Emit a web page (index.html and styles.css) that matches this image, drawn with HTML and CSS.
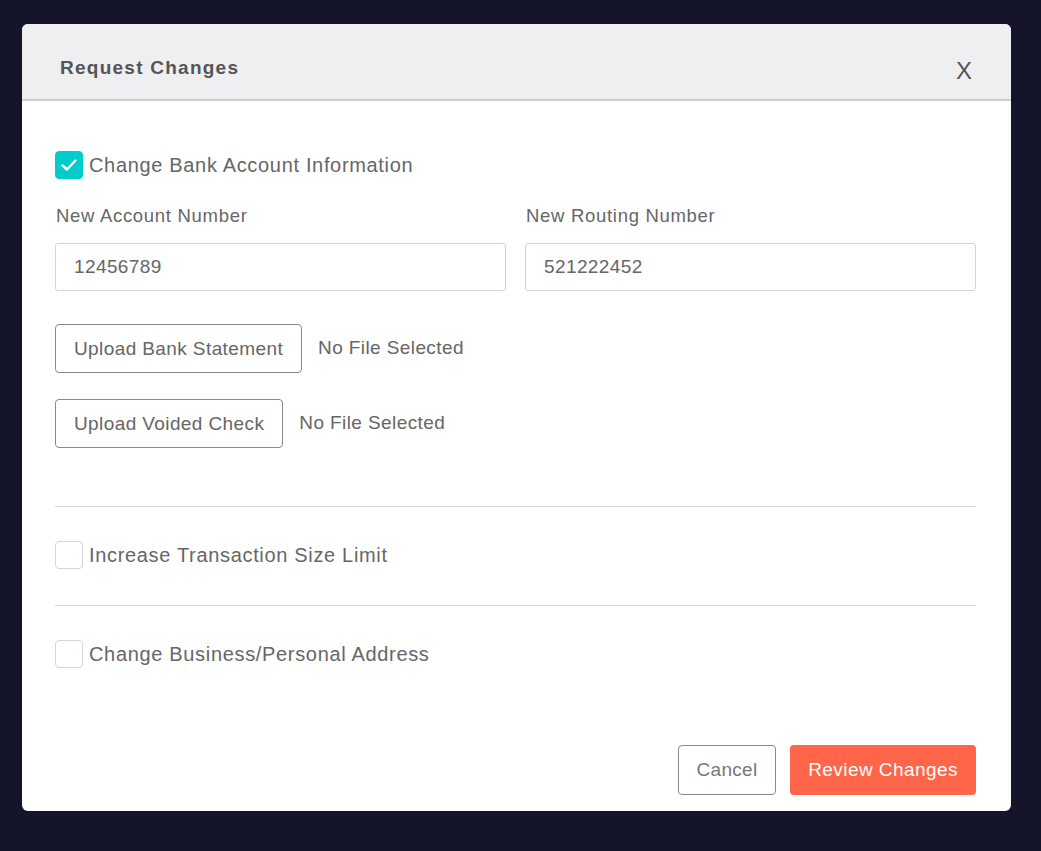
FILE: index.html
```html
<!DOCTYPE html>
<html>
<head>
<meta charset="utf-8">
<link rel="stylesheet" href="styles.css">
</head>
<body>
<div class="modal">
  <div class="modal-header">
    <h2 class="title">Request Changes</h2>
    <span class="close">X</span>
  </div>
  <div class="modal-body">
    <div class="section section-first">
      <label class="check-row">
        <span class="box checked">
          <svg width="18" height="14" viewBox="0 0 18 14"><path d="M2.5 7.5 L7 11.5 L15.5 2.5" fill="none" stroke="#fff" stroke-width="2.4" stroke-linecap="round" stroke-linejoin="round"/></svg>
        </span>
        <span class="check-label">Change Bank Account Information</span>
      </label>
      <div class="fields">
        <div class="field">
          <div class="field-label">New Account Number</div>
          <div class="input">12456789</div>
        </div>
        <div class="field">
          <div class="field-label">New Routing Number</div>
          <div class="input">521222452</div>
        </div>
      </div>
      <div class="upload-row upload-first">
        <span class="btn-outline">Upload Bank Statement</span>
        <span class="file-status">No File Selected</span>
      </div>
      <div class="upload-row upload-second">
        <span class="btn-outline">Upload Voided Check</span>
        <span class="file-status">No File Selected</span>
      </div>
    </div>
    <div class="section section-mid">
      <label class="check-row">
        <span class="box"></span>
        <span class="check-label">Increase Transaction Size Limit</span>
      </label>
    </div>
    <div class="section section-last">
      <label class="check-row">
        <span class="box"></span>
        <span class="check-label">Change Business/Personal Address</span>
      </label>
    </div>
    <div class="actions">
      <span class="btn-cancel">Cancel</span>
      <span class="btn-primary">Review Changes</span>
    </div>
  </div>
</div>
</body>
</html>
```
FILE: styles.css
```css
* { box-sizing: border-box; }
html, body { margin: 0; padding: 0; }
body {
  background: #14152b;
  width: 1041px;
  height: 851px;
  overflow: hidden;
  font-family: "Liberation Sans", Arial, sans-serif;
  color: #666;
}
.modal {
  margin: 24px 0 0 22px;
  width: 989px;
  height: 787px;
  background: #fff;
  border-radius: 6px;
  overflow: hidden;
  display: flex;
  flex-direction: column;
}
.modal-header {
  height: 77px;
  background: #efeff1;
  border-bottom: 2px solid #cfcfd1;
  display: flex;
  align-items: center;
  justify-content: space-between;
  padding: 12px 38px 0 38px;
  flex-shrink: 0;
}
.title {
  margin: 0;
  font-size: 19px;
  font-weight: bold;
  color: #555;
  letter-spacing: 1.25px;
}
.close {
  font-size: 24px;
  color: #555;
  padding-top: 6px;
  margin-right: 1px;
}
.modal-body {
  padding: 50px 35px 0 33px;
  display: flex;
  flex-direction: column;
  flex: 1;
}
.check-row {
  display: flex;
  align-items: center;
  height: 28px;
}
.box {
  width: 28px;
  height: 28px;
  border: 1px solid #d6d6d6;
  border-radius: 4px;
  display: flex;
  align-items: center;
  justify-content: center;
  margin-right: 6px;
  flex-shrink: 0;
}
.box.checked {
  background: #00cccc;
  border-color: #00cccc;
}
.check-label {
  font-size: 20px;
  letter-spacing: 0.67px;
  color: #666;
}
.fields {
  display: grid;
  grid-template-columns: 1fr 1fr;
  column-gap: 19px;
  margin-top: 25px;
}
.field-label {
  font-size: 18.5px;
  letter-spacing: 0.7px;
  line-height: 24px;
  margin-left: 1px;
  margin-bottom: 15px;
  color: #666;
}
.input {
  height: 48px;
  border: 1px solid #d3d3d3;
  border-radius: 3px;
  padding: 0 18px;
  display: flex;
  align-items: center;
  font-size: 19px;
  letter-spacing: 0.4px;
  color: #666;
}
.upload-row {
  display: flex;
  align-items: center;
  gap: 16px;
}
.upload-first { margin-top: 33px; }
.upload-second { margin-top: 26px; }
.btn-outline {
  height: 49px;
  border: 1px solid #8a8a8a;
  border-radius: 4px;
  padding: 0 18px;
  display: flex;
  align-items: center;
  font-size: 19px;
  letter-spacing: 0.4px;
  color: #666;
}
.file-status {
  font-size: 19px;
  letter-spacing: 0.4px;
  color: #666;
  padding-bottom: 2px;
}
.section-first {
  padding-bottom: 58px;
  border-bottom: 1px solid #d3d3d3;
}
.section-mid {
  padding: 34px 0 36px;
  border-bottom: 1px solid #d3d3d3;
}
.section-last {
  padding-top: 34px;
}
.actions {
  margin-top: auto;
  margin-bottom: 16px;
  display: flex;
  justify-content: flex-end;
  gap: 14px;
}
.btn-cancel {
  width: 98px;
  height: 50px;
  border: 1px solid #8a8a8a;
  border-radius: 4px;
  display: flex;
  align-items: center;
  justify-content: center;
  font-size: 19px;
  letter-spacing: 0.3px;
  color: #777;
}
.btn-primary {
  width: 186px;
  height: 50px;
  background: #ff6548;
  border-radius: 4px;
  display: flex;
  align-items: center;
  justify-content: center;
  font-size: 19px;
  letter-spacing: 0.43px;
  color: #fff;
}
```
